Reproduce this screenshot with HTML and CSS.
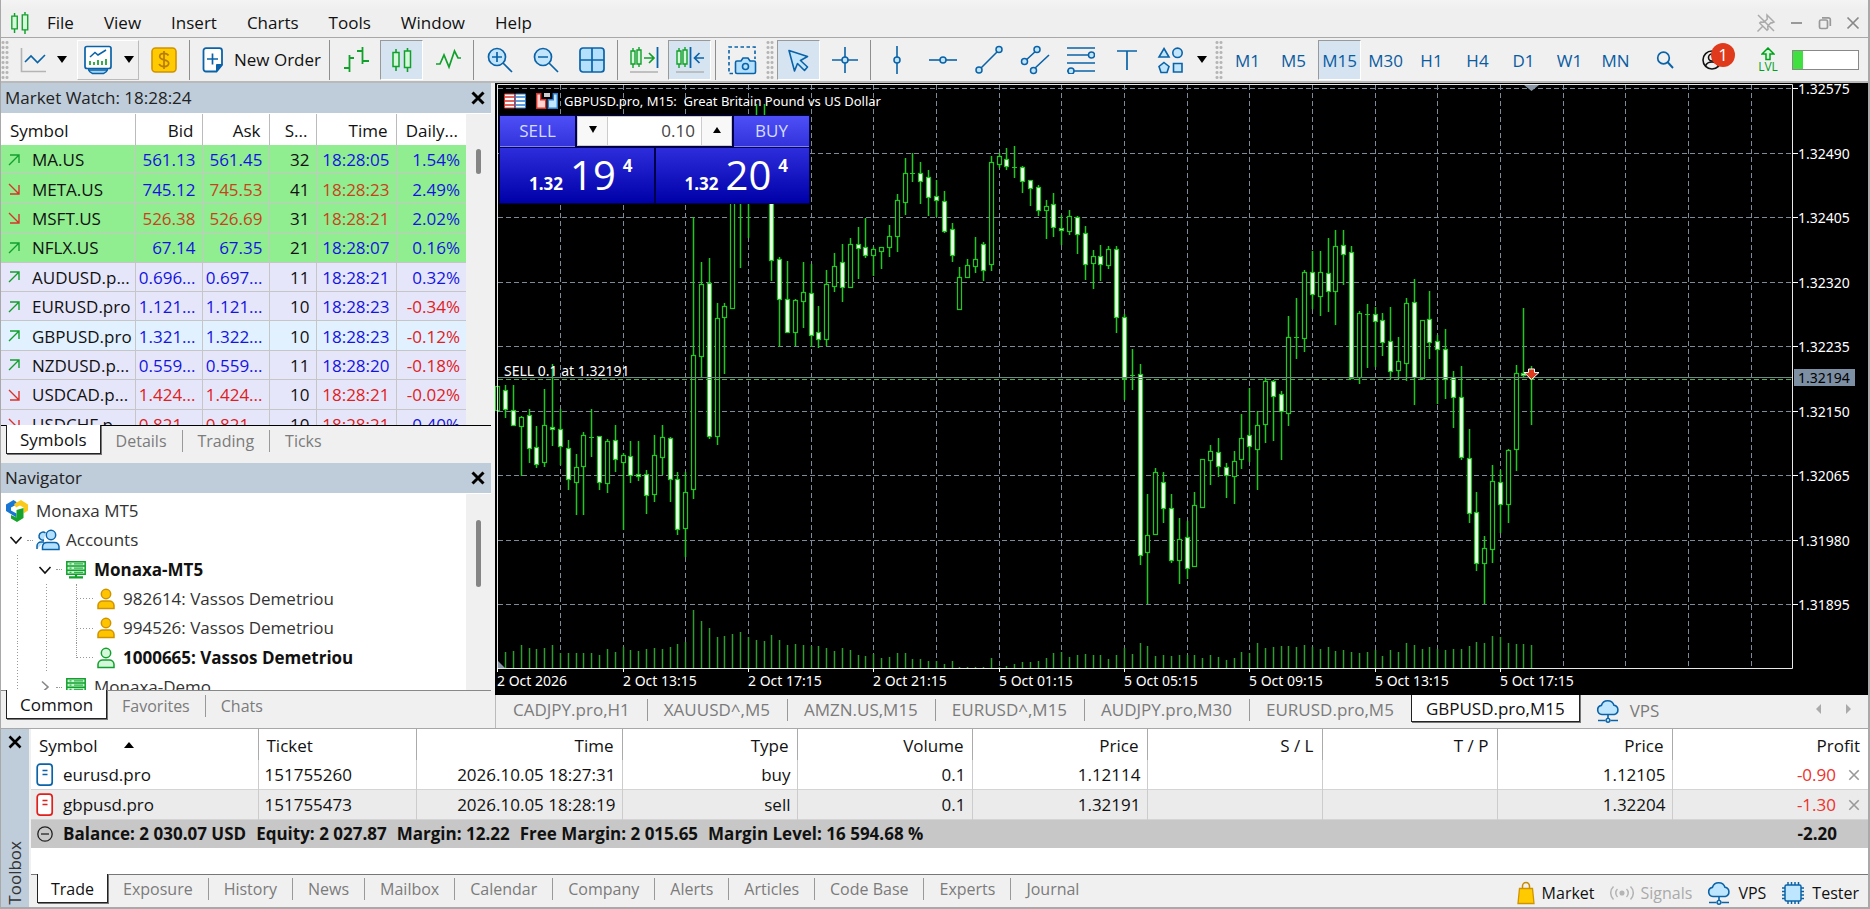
FILE: index.html
```html
<!DOCTYPE html>
<html lang="en">
<head>
<meta charset="utf-8">
<title>Monaxa MT5</title>
<link rel="stylesheet" href="styles.css">
</head>
<body>
<svg class="defs" width="0" height="0" aria-hidden="true">
  <defs>
    <symbol id="i-x" viewBox="0 0 14 14"><path d="M1.5 1.5l11 11M12.5 1.5l-11 11" fill="none" stroke="currentColor"/></symbol>
    <symbol id="i-up" viewBox="0 0 12 12"><path d="M1 11L11 1M2 1h9v8" fill="none" stroke="#12a02c" stroke-width="1.4"/></symbol>
    <symbol id="i-dn" viewBox="0 0 12 12"><path d="M1 1l10 10M11 2v9H2" fill="none" stroke="#d8332a" stroke-width="1.4"/></symbol>
    <symbol id="i-cloud" viewBox="0 0 24 24"><path d="M6 15.5a4.6 4.6 0 0 1-.6-9.1A6.6 6.6 0 0 1 18 6.3a4.7 4.7 0 0 1 .3 9.2z" fill="#bfe6ff" stroke="#0a63a8" stroke-width="1.6"/><path d="M12 15.5v4M2 21.5h7.5M14.5 21.5H22" fill="none" stroke="#0a63a8" stroke-width="1.6"/><circle cx="12" cy="21.3" r="1.9" fill="#bfe6ff" stroke="#0a63a8" stroke-width="1.4"/></symbol>
    <symbol id="i-user" viewBox="0 0 18 22"><circle cx="9" cy="6" r="4.7" stroke-width="1.5"/><path d="M1 20.5v-3.2a4.6 4.6 0 0 1 4.6-4.2h6.8a4.6 4.6 0 0 1 4.6 4.2v3.2z" stroke-width="1.5"/></symbol>
    <symbol id="i-server" viewBox="0 0 20 18"><path d="M.8.8h18.4v12.4H.8zM.8 5h18.4M.8 9.2h18.4" fill="#c4f7cf" stroke="#12a02c" stroke-width="1.5"/><path d="M3.5 2.9h2M3.5 7.1h2M3.5 11.3h2M8 2.9h9M8 7.1h9M8 11.3h9" stroke="#12a02c" stroke-width="1"/><path d="M10 13v3M3 16.4h14" stroke="#12a02c" stroke-width="2.2"/></symbol>
    <symbol id="i-chev" viewBox="0 0 14 14"><path d="M1.5 4L7 10l5.500-6" fill="none" stroke="currentColor" stroke-width="1.6"/></symbol>
    <symbol id="i-doc" viewBox="0 0 18 24"><rect x="1.200" y="1.200" width="15" height="21" rx="3" fill="#fff" stroke="currentColor" stroke-width="1.700"/><path d="M6.500 7.500h5M6.500 11.500h5" stroke="currentColor" stroke-width="1.300"/></symbol>
    <symbol id="i-candles" viewBox="0 0 22 24"><path d="M5 1v22M16.500 0v24" stroke="#12a02c" stroke-width="1.600"/><path d="M2 4.500h6v14H2zM13.500 3h6v16.500h-6z" fill="#d5f8da" stroke="#12a02c" stroke-width="1.500"/></symbol>
  </defs>
</svg>

<div class="app">
  <header class="menubar">
    <svg class="logo" width="20" height="22"><use href="#i-candles"/></svg>
    <nav class="menu">
      <button>File</button><button>View</button><button>Insert</button><button>Charts</button><button>Tools</button><button>Window</button><button>Help</button>
    </nav>
    <div class="winctl">
      <button aria-label="Unpin"><svg width="20" height="20" viewBox="0 0 20 20" fill="none" stroke="#aaa" stroke-width="1.500"><path d="M1.500 18.500l5-5M11 2l7 7-2 1-1-.3-3.300 3.300.3 3.300-1 1L3.700 10l1-1 3.300.3 3.300-3.300L11 4zM2 2l16 16"/></svg></button>
      <button aria-label="Minimize"><svg width="14" height="14"><path d="M1 7h11" stroke="#999" stroke-width="2"/></svg></button>
      <button aria-label="Restore"><svg width="14" height="14" fill="none" stroke="#999" stroke-width="1.700"><rect x="1.500" y="4" width="8" height="8.500" rx="1.500"/><path d="M4 1.800h6.500a1.800 1.800 0 0 1 1.800 1.800V10"/></svg></button>
      <button aria-label="Close" class="grey"><svg width="14" height="14" stroke-width="1.700"><use href="#i-x"/></svg></button>
    </div>
  </header>

  <div class="toolbar">
    <i class="grip"></i>
    <button class="tb w-line" aria-label="Line studies"><svg width="28" height="28" viewBox="0 0 28 28" fill="none"><path d="M2.500 2v23.500H27" stroke="#b4b4b4" stroke-width="1.600"/><path d="M6 16l6-6 6.500 6.500L26 9" stroke="#0a63a8" stroke-width="1.600"/></svg><b class="caret"></b></button>
    <button class="tb w-ind raised" aria-label="Indicators"><svg width="30" height="30" viewBox="0 0 30 30" fill="none"><path d="M4.500 22h21l-2 4.500-3 2h-11l-3-2zM5 25h20" fill="#a9d3ee" stroke="#0a63a8" stroke-width="1.300"/><rect x="2" y="1.500" width="26" height="22" rx="2" fill="#fff" stroke="#0a63a8" stroke-width="1.700"/><path d="M7 12l5-4.500 3 2.500 8-5" stroke="#0a63a8" stroke-width="1.500"/><path d="M7 20v-4M11 20v-3M15 20v-5M19 20v-4M23 20v-6" stroke="#12a02c" stroke-width="1.700"/></svg><b class="caret"></b></button>
    <button class="tb" aria-label="Symbols"><svg width="26" height="26" viewBox="0 0 26 26"><rect x="1" y="1" width="24" height="24" rx="3.500" fill="#ffcb00" stroke="#d09300" stroke-width="1.600"/><path d="M17.500 8.500c-.8-1.500-2.300-2.200-4.500-2.200-2.600 0-4.300 1.200-4.300 3.200 0 4.600 9 2 9 6.800 0 2.200-2 3.300-4.700 3.300-2.500 0-4.200-.9-4.900-2.600M13 4v18" fill="none" stroke="#b87b00" stroke-width="1.700"/></svg></button>
    <i class="sep"></i>
    <button class="tb w-order"><svg width="22" height="26" viewBox="0 0 22 26"><path d="M4 1.200h13.500a2.500 2.500 0 0 1 2.500 2.500V18l-5.500 6.500H4A2.500 2.500 0 0 1 1.500 22V3.700A2.500 2.500 0 0 1 4 1.200z" fill="#fff" stroke="#0a63a8" stroke-width="1.800"/><path d="M20 17.500h-5.500v7z" fill="#0a63a8" stroke="#0a63a8"/><path d="M10.500 6.500v11M5 12h11" stroke="#0a63a8" stroke-width="1.700"/></svg><span>New Order</span></button>
    <i class="sep"></i>
    <button class="tb" aria-label="Bar chart"><svg width="26" height="28" viewBox="0 0 26 28"><path d="M6.500 9v17M1 22h5.500M6.500 12H11M19.500 1v17M14 5h5.500M19.500 15H26" fill="none" stroke="#12a02c" stroke-width="1.800"/></svg></button>
    <button class="tb on" aria-label="Candlesticks"><svg width="22" height="26"><use href="#i-candles"/></svg></button>
    <button class="tb" aria-label="Line chart"><svg width="26" height="24" viewBox="0 0 26 24"><path d="M1 16h4l4-9 5 12 5.500-16L23 10h3" fill="none" stroke="#12a02c" stroke-width="1.700"/></svg></button>
    <i class="sep"></i>
    <button class="tb" aria-label="Zoom in"><svg width="28" height="28" viewBox="0 0 28 28"><circle cx="11" cy="11" r="8.500" fill="#c3e5fb" stroke="#0a63a8" stroke-width="1.700"/><path d="M17 17l9 9M6 11h10M11 6v10" stroke="#0a63a8" stroke-width="1.700"/></svg></button>
    <button class="tb" aria-label="Zoom out"><svg width="28" height="28" viewBox="0 0 28 28"><circle cx="11" cy="11" r="8.500" fill="#c3e5fb" stroke="#0a63a8" stroke-width="1.700"/><path d="M17 17l9 9M6 11h10" stroke="#0a63a8" stroke-width="1.700"/></svg></button>
    <button class="tb" aria-label="Tile windows"><svg width="26" height="26" viewBox="0 0 26 26"><rect x="1" y="1" width="24" height="24" rx="3" fill="#b5e0fd" stroke="#0a63a8" stroke-width="1.700"/><path d="M13 1v24M1 13h24" stroke="#0a63a8" stroke-width="1.700"/></svg></button>
    <i class="sep"></i>
    <button class="tb" aria-label="Shift chart end"><svg width="30" height="28" viewBox="0 0 30 28"><path d="M4 2v20M10 1v20" stroke="#12a02c" stroke-width="1.400"/><path d="M2 5h4v13H2zM8 4h4v14H8z" fill="#d5f8da" stroke="#12a02c" stroke-width="1.400"/><path d="M15 12h9M20 7l5 5-5 5" fill="none" stroke="#12a02c" stroke-width="1.700"/><path d="M28.500 1v21" stroke="#0a63a8" stroke-width="1.800"/><path d="M1 26h28" stroke="#b4b4b4" stroke-width="1.600"/></svg></button>
    <button class="tb on" aria-label="Auto scroll"><svg width="30" height="28" viewBox="0 0 30 28"><path d="M4 2v20M10 1v20" stroke="#12a02c" stroke-width="1.400"/><path d="M2 5h4v13H2zM8 4h4v14H8z" fill="#d5f8da" stroke="#12a02c" stroke-width="1.400"/><path d="M29 12H20M24.500 7l-5 5 5 5" fill="none" stroke="#0a63a8" stroke-width="1.700"/><path d="M15.500 1v21" stroke="#0a63a8" stroke-width="1.800"/><path d="M1 26h28" stroke="#b4b4b4" stroke-width="1.600"/></svg></button>
    <i class="sep"></i>
    <button class="tb" aria-label="Screenshot"><svg width="30" height="30" viewBox="0 0 30 30" fill="none"><path d="M6 28.500H2V2h26v12" stroke="#0a63a8" stroke-width="1.600" stroke-dasharray="3.500 2.500"/><path d="M10 16h4l2-3h5l2 3h4a1.500 1.500 0 0 1 1.500 1.500V27a1.500 1.500 0 0 1-1.500 1.500H10A1.500 1.500 0 0 1 8.500 27v-9.500A1.500 1.500 0 0 1 10 16z" fill="#b5e0fd" stroke="#0a63a8" stroke-width="1.600"/><circle cx="18.500" cy="21.500" r="3" stroke="#0a63a8" stroke-width="1.600"/></svg></button>
    <i class="grip"></i>
    <button class="tb on" aria-label="Cursor"><svg width="24" height="24" viewBox="0 0 24 24"><path d="M2 2.500l18.500 6-7 4 7 6.500-3 3.500-7-7-3 7.500z" fill="#c3e5fb" stroke="#0a63a8" stroke-width="1.600" stroke-linejoin="round"/></svg></button>
    <button class="tb" aria-label="Crosshair"><svg width="26" height="26" viewBox="0 0 26 26"><path d="M13 0v26M0 13h26" stroke="#0a63a8" stroke-width="1.600"/><circle cx="13" cy="13" r="3" fill="#c3e5fb" stroke="#0a63a8" stroke-width="1.500"/></svg></button>
    <i class="sep"></i>
    <button class="tb" aria-label="Vertical line"><svg width="10" height="28" viewBox="0 0 10 28"><path d="M5 0v28" stroke="#0a63a8" stroke-width="1.600"/><circle cx="5" cy="14" r="3" fill="#c3e5fb" stroke="#0a63a8" stroke-width="1.500"/></svg></button>
    <button class="tb" aria-label="Horizontal line"><svg width="28" height="10" viewBox="0 0 28 10"><path d="M0 5h28" stroke="#0a63a8" stroke-width="1.600"/><circle cx="14" cy="5" r="3" fill="#c3e5fb" stroke="#0a63a8" stroke-width="1.500"/></svg></button>
    <button class="tb" aria-label="Trendline"><svg width="30" height="30" viewBox="0 0 30 30"><path d="M5 25L25 5" stroke="#0a63a8" stroke-width="1.600"/><circle cx="5" cy="25" r="3" fill="#c3e5fb" stroke="#0a63a8" stroke-width="1.500"/><circle cx="25" cy="4.500" r="3" fill="#c3e5fb" stroke="#0a63a8" stroke-width="1.500"/></svg></button>
    <button class="tb" aria-label="Channel"><svg width="30" height="30" viewBox="0 0 30 30"><path d="M4 17L17 5M13 25l16-15" stroke="#0a63a8" stroke-width="1.600"/><g fill="#c3e5fb" stroke="#0a63a8" stroke-width="1.500"><circle cx="4.500" cy="16.500" r="3"/><circle cx="17" cy="4.500" r="3"/><circle cx="13.500" cy="25.500" r="3"/></g></svg></button>
    <button class="tb" aria-label="Fibonacci"><svg width="28" height="28" viewBox="0 0 28 28"><path d="M0 2h28M0 9h28M0 17h28M0 25h28" stroke="#0a63a8" stroke-width="1.600"/><g fill="#c3e5fb" stroke="#0a63a8" stroke-width="1.500"><circle cx="24.500" cy="9" r="3"/><circle cx="4" cy="25" r="3"/></g></svg></button>
    <button class="tb" aria-label="Text"><svg width="20" height="22" viewBox="0 0 20 22"><path d="M0 2h20M10 2v19" stroke="#0a63a8" stroke-width="1.700"/></svg></button>
    <button class="tb w-shapes" aria-label="Shapes"><svg width="28" height="28" viewBox="0 0 28 28" fill="#c3e5fb" stroke="#0a63a8" stroke-width="1.600"><path d="M7 2.500l5 8.500H2z"/><circle cx="20.500" cy="6.800" r="4.700"/><path d="M7 16.500l5 4-2 6H4l-2-6z"/><path d="M16.500 17.500h8.500v8.500h-8.500z"/></svg><b class="caret"></b></button>
    <i class="grip"></i>
    <button class="tb tf">M1</button><button class="tb tf">M5</button><button class="tb tf on">M15</button><button class="tb tf">M30</button><button class="tb tf">H1</button><button class="tb tf">H4</button><button class="tb tf">D1</button><button class="tb tf">W1</button><button class="tb tf">MN</button>
    <button class="tb w-find" aria-label="Search"><svg width="18" height="18" viewBox="0 0 18 18"><circle cx="7.500" cy="7" r="5.800" fill="none" stroke="#0a63a8" stroke-width="1.700"/><path d="M11.500 11l5.500 6" stroke="#0a63a8" stroke-width="1.900"/></svg></button>
    <button class="tb w-acct" aria-label="Notifications"><svg width="20" height="20" viewBox="0 0 20 20" fill="none" stroke="#111" stroke-width="1.600"><circle cx="10" cy="10" r="9"/><circle cx="10" cy="7.500" r="3.500"/><path d="M3.500 16c1-3 3-4 6.500-4s5.500 1 6.500 4"/></svg><span class="badge">1</span></button>
    <button class="tb w-lvl" aria-label="Level"><svg width="14" height="14" viewBox="0 0 14 14"><path d="M7 1l6 6H9v5.500H5V7H1z" fill="#d5f8da" stroke="#00a11a" stroke-width="1.500"/></svg><span>LVL</span></button>
    <div class="gauge"><i></i></div>
  </div>

  <main class="main">
    <aside class="side">
      <section class="panel watch">
        <div class="phead"><h2>Market Watch: 18:28:24</h2><button aria-label="Close"><svg width="14" height="14" stroke-width="3"><use href="#i-x"/></svg></button></div>
        <div class="pbody">
          <table class="quotes">
            <colgroup><col class="q1"><col class="q2"><col class="q2"><col class="q3"><col class="q4"><col class="q5"></colgroup>
            <thead><tr><th>Symbol</th><th>Bid</th><th>Ask</th><th>S...</th><th>Time</th><th>Daily...</th></tr></thead>
            <tbody>
              <tr class="g"><td><svg class="dir"><use href="#i-up"/></svg>MA.US</td><td class="b">561.13</td><td class="b">561.45</td><td>32</td><td class="b">18:28:05</td><td class="b">1.54%</td></tr>
              <tr class="g"><td><svg class="dir"><use href="#i-dn"/></svg>META.US</td><td class="b">745.12</td><td class="r">745.53</td><td>41</td><td class="r">18:28:23</td><td class="b">2.49%</td></tr>
              <tr class="g"><td><svg class="dir"><use href="#i-dn"/></svg>MSFT.US</td><td class="r">526.38</td><td class="r">526.69</td><td>31</td><td class="r">18:28:21</td><td class="b">2.02%</td></tr>
              <tr class="g"><td><svg class="dir"><use href="#i-up"/></svg>NFLX.US</td><td class="b">67.14</td><td class="b">67.35</td><td>21</td><td class="b">18:28:07</td><td class="b">0.16%</td></tr>
              <tr><td><svg class="dir"><use href="#i-up"/></svg>AUDUSD.p...</td><td class="b">0.696...</td><td class="b">0.697...</td><td>11</td><td class="b">18:28:21</td><td class="b">0.32%</td></tr>
              <tr><td><svg class="dir"><use href="#i-up"/></svg>EURUSD.pro</td><td class="b">1.121...</td><td class="b">1.121...</td><td>10</td><td class="b">18:28:23</td><td class="r">-0.34%</td></tr>
              <tr class="sel"><td><svg class="dir"><use href="#i-up"/></svg>GBPUSD.pro</td><td class="b">1.321...</td><td class="b">1.322...</td><td>10</td><td class="b">18:28:23</td><td class="r">-0.12%</td></tr>
              <tr><td><svg class="dir"><use href="#i-up"/></svg>NZDUSD.p...</td><td class="b">0.559...</td><td class="b">0.559...</td><td>11</td><td class="b">18:28:20</td><td class="r">-0.18%</td></tr>
              <tr><td><svg class="dir"><use href="#i-dn"/></svg>USDCAD.p...</td><td class="r">1.424...</td><td class="r">1.424...</td><td>10</td><td class="r">18:28:21</td><td class="r">-0.02%</td></tr>
              <tr><td><svg class="dir"><use href="#i-dn"/></svg>USDCHF.p...</td><td class="r">0.821...</td><td class="r">0.821...</td><td>10</td><td class="r">18:28:21</td><td class="b">0.40%</td></tr>
            </tbody>
          </table>
          <div class="scroll s-watch"><i></i></div>
        </div>
        <div class="tabs black"><button class="tab cur">Symbols</button><button class="tab">Details</button><button class="tab">Trading</button><button class="tab">Ticks</button></div>
      </section>
      <section class="panel navi">
        <div class="phead"><h2>Navigator</h2><button aria-label="Close"><svg width="14" height="14" stroke-width="3"><use href="#i-x"/></svg></button></div>
        <div class="pbody">
          <ul class="tree">
            <li class="l0"><svg class="brand" width="22" height="22" viewBox="0 0 22 22"><path d="M0 4.500L7.500 0l3 2v2.500L5 7.500v3l5.500 3v4L0 11z" fill="#1976d2"/><path d="M8 4l7-4 7 4.500v6l-4.500 3V7.500L14 5.500l-4 2z" fill="#fbc91a"/><path d="M5 15l5.500 2.500V10l7-2v10l-6.500 4-6-3.500z" fill="#16a32b"/></svg><span>Monaxa MT5</span></li>
            <li class="l1"><svg class="chev"><use href="#i-chev"/></svg><i class="dots"></i><svg width="24" height="22" viewBox="0 0 24 22" fill="#b5e0fd" stroke="#0a63a8" stroke-width="1.500"><path d="M9.500 4a4 4 0 1 0-1.500 7M1 20v-3a4 4 0 0 1 4-4h3"/><circle cx="15" cy="6" r="4.700"/><path d="M6.500 20.500v-3a4.500 4.500 0 0 1 4.500-4h7.500a4.500 4.500 0 0 1 4.500 4v3z"/></svg><span>Accounts</span></li>
            <li class="l2"><svg class="chev"><use href="#i-chev"/></svg><i class="dots"></i><svg width="20" height="18"><use href="#i-server"/></svg><strong>Monaxa-MT5</strong></li>
            <li class="l3"><i class="twig"></i><svg class="gold" width="18" height="22"><use href="#i-user"/></svg><span>982614: Vassos Demetriou</span></li>
            <li class="l3"><i class="twig"></i><svg class="gold" width="18" height="22"><use href="#i-user"/></svg><span>994526: Vassos Demetriou</span></li>
            <li class="l3"><i class="twig last"></i><svg class="live" width="18" height="22"><use href="#i-user"/></svg><strong>1000665: Vassos Demetriou</strong></li>
            <li class="l2"><svg class="chev closed"><use href="#i-chev"/></svg><i class="dots"></i><svg width="20" height="18"><use href="#i-server"/></svg><span>Monaxa-Demo</span></li>
          </ul>
          <div class="scroll s-navi"><i></i></div>
        </div>
        <div class="tabs"><button class="tab cur">Common</button><button class="tab">Favorites</button><button class="tab">Chats</button></div>
      </section>
    </aside>

    <section class="charts">
      <div class="chart">
        <svg id="plot" class="plot"></svg>
        <div class="ctitle">
          <svg width="22" height="16" viewBox="0 0 22 16"><path d="M.5 1h10v14H.5z" fill="#fff" stroke="#d8332a"/><path d="M11.500 1h10v14h-10z" fill="#fff" stroke="#2c7fd0"/><path d="M1 4h9M1 8h9M1 12h9" stroke="#d8332a" stroke-width="1.700"/><path d="M12 4h9M12 8h9M12 12h9" stroke="#2c7fd0" stroke-width="1.700"/></svg>
          <svg width="22" height="16" viewBox="0 0 22 16"><path d="M.7.7h4v6h5v8.600h-9z" fill="#ffd3cf" stroke="#d8332a" stroke-width="1.400"/><path d="M21.300.7h-4v6h-5v8.600h9z" fill="#c3e5fb" stroke="#2c7fd0" stroke-width="1.400"/><path d="M8 0h6v4H8z" fill="#ccc"/></svg>
          <span>GBPUSD.pro, M15:&nbsp; Great Britain Pound vs US Dollar</span>
        </div>
        <div class="oneclick">
          <button class="oc-side sell">SELL</button>
          <div class="spin"><button aria-label="Decrease"><b class="caret"></b></button><input aria-label="Volume" value="0.10"><button aria-label="Increase"><b class="caret flip"></b></button></div>
          <button class="oc-side buy">BUY</button>
          <button class="oc-price"><b>1.32</b><span>19</span><sup>4</sup></button>
          <button class="oc-price"><b>1.32</b><span>20</span><sup>4</sup></button>
        </div>
      </div>
      <div class="ctabs">
        <button class="tab">CADJPY.pro,H1</button><button class="tab">XAUUSD^,M5</button><button class="tab">AMZN.US,M15</button><button class="tab">EURUSD^,M15</button><button class="tab">AUDJPY.pro,M30</button><button class="tab">EURUSD.pro,M5</button><button class="tab cur">GBPUSD.pro,M15</button><button class="tab vps"><svg width="24" height="24"><use href="#i-cloud"/></svg>VPS</button>
        <span class="arrows"><button aria-label="Previous"><svg width="6" height="10"><path d="M5 0v10L0 5z" fill="#aaa"/></svg></button><button aria-label="Next"><svg width="6" height="10"><path d="M0 0v10l5-5z" fill="#aaa"/></svg></button></span>
      </div>
    </section>
  </main>

  <section class="toolbox">
    <div class="strip"><button aria-label="Close"><svg width="14" height="14" stroke-width="2.600"><use href="#i-x"/></svg></button><span>Toolbox</span></div>
    <div class="tbody">
      <div class="twrap">
      <table class="trades">
        <colgroup><col class="c1"><col class="c2"><col class="c3"><col class="c4"><col class="c4"><col class="c4"><col class="c4"><col class="c4"><col class="c4"><col></colgroup>
        <thead><tr><th>Symbol <b class="caret flip"></b></th><th>Ticket</th><th>Time</th><th>Type</th><th>Volume</th><th>Price</th><th>S / L</th><th>T / P</th><th>Price</th><th>Profit</th></tr></thead>
        <tbody>
          <tr><td><svg class="doc buyc" width="18" height="24"><use href="#i-doc"/></svg>eurusd.pro</td><td>151755260</td><td>2026.10.05 18:27:31</td><td>buy</td><td>0.1</td><td>1.12114</td><td></td><td></td><td>1.12105</td><td class="loss">-0.90<button aria-label="Close position"><svg width="12" height="12" stroke-width="1.900"><use href="#i-x"/></svg></button></td></tr>
          <tr class="alt"><td><svg class="doc sellc" width="18" height="24"><use href="#i-doc"/></svg>gbpusd.pro</td><td>151755473</td><td>2026.10.05 18:28:19</td><td>sell</td><td>0.1</td><td>1.32191</td><td></td><td></td><td>1.32204</td><td class="loss">-1.30<button aria-label="Close position"><svg width="12" height="12" stroke-width="1.900"><use href="#i-x"/></svg></button></td></tr>
        </tbody>
        <tfoot><tr><td colspan="9"><svg class="minus" width="16" height="16" viewBox="0 0 16 16" fill="none" stroke="#222" stroke-width="1.300"><circle cx="8" cy="8" r="7.200"/><path d="M4 8h8"/></svg><span>Balance: 2 030.07 USD</span><span>Equity: 2 027.87</span><span>Margin: 12.22</span><span>Free Margin: 2 015.65</span><span>Margin Level: 16 594.68 %</span></td><td>-2.20</td></tr></tfoot>
      </table>
      </div>
      <div class="btabs">
        <button class="tab cur">Trade</button><button class="tab">Exposure</button><button class="tab">History</button><button class="tab">News</button><button class="tab">Mailbox</button><button class="tab">Calendar</button><button class="tab">Company</button><button class="tab">Alerts</button><button class="tab">Articles</button><button class="tab">Code Base</button><button class="tab">Experts</button><button class="tab">Journal</button>
        <span class="status">
          <button><svg width="18" height="24" viewBox="0 0 18 24"><path d="M5.500 9V5a3.500 3.500 0 0 1 7 0v4" fill="none" stroke="#c78a00" stroke-width="1.500"/><path d="M2.500 7.500h13l1.500 15H1z" fill="#ffcb00" stroke="#d09300" stroke-width="1.300"/></svg>Market</button>
          <button class="off"><svg width="24" height="18" viewBox="0 0 24 18" fill="none" stroke="#b4b4b4" stroke-width="1.500"><circle cx="12" cy="9" r="1.800" fill="#b4b4b4"/><path d="M7.500 5a5.500 5.500 0 0 0 0 8M16.500 5a5.500 5.500 0 0 1 0 8M3.500 2.500a9 9 0 0 0 0 13M20.500 2.500a9 9 0 0 1 0 13"/></svg>Signals</button>
          <button><svg width="24" height="24"><use href="#i-cloud"/></svg>VPS</button>
          <button><svg width="24" height="24" viewBox="0 0 24 24" stroke="#0a63a8" stroke-width="1.500"><path d="M7 1v22M10.500 1v22M14 1v22M17.500 1v22M1 7h22M1 10.500h22M1 14h22M1 17.500h22"/><rect x="4" y="4" width="16" height="16" rx="1.500" fill="#bfe6ff"/></svg>Tester</button>
        </span>
      </div>
    </div>
  </section>
</div>
<script src="chart.js"></script>
</body>
</html>
```
FILE: styles.css
```css
* { box-sizing: border-box; }
html, body { margin: 0; height: 100%; }
body { background: #f0f0f0; font: 17px/22px "Open Sans", "Noto Sans", sans-serif; color: #111; }
button, input { font: inherit; color: inherit; background: none; border: 0; padding: 0; margin: 0; }
h2 { font: inherit; margin: 0; }
.defs { position: absolute; }
.app { display: flex; flex-direction: column; height: 100vh; border: solid #a9a9a9; border-width: 0 2px 2px 1px; overflow: hidden; }

.menubar { display: flex; align-items: center; flex: 0 0 38px; padding: 8px 8px 0 9px; border-bottom: 1px solid #a8a8a8; background: linear-gradient(#f4f4f4, #efefef 10px); }
.menu { display: flex; flex: 1; padding-left: 2px; }
.menu button { padding: 0 15px; }
.winctl { display: flex; align-items: center; gap: 14px; }
.winctl button { display: flex; }
.grey { color: #888; }

.toolbar { display: flex; align-items: center; gap: 3px; flex: 0 0 45px; border-bottom: 2px solid #b9b9b9; }
.tb { display: flex; align-items: center; justify-content: center; flex: 0 0 43px; height: 40px; }
.tb.on { background: #d6e4f1; border: 1px solid; border-color: #999 #fff #fff #999; }
.grip { flex: 0 0 8px; height: 40px; background: radial-gradient(circle, #b5b5b5 1px, transparent 2px) 0 0 / 4px 5px; }
.sep { flex: 0 0 3px; height: 40px; background: linear-gradient(90deg, transparent 1px, #8e8e8e 1px, #8e8e8e 2px, transparent 2px); }
.caret { display: inline-block; border: solid transparent; border-width: 7px 5px 0; border-top-color: #000; }
.caret.flip { border-width: 0 5px 6px; border-bottom-color: #000; }
.w-line { flex-basis: 62px; gap: 10px; }
.w-ind { flex-basis: 62px; gap: 11px; }
.raised { border: 1px solid; border-color: #fff #bbb #bbb #fff; }
.w-order { flex-basis: 131px; gap: 10px; padding-left: 4px; }
.w-shapes { flex-basis: 61px; gap: 12px; }
.tf { color: #0a5ca0; font-size: 17px; padding-top: 2px; }
.w-find { flex-basis: 50px; }
.w-acct { flex-basis: 51px; position: relative; padding-right: 14px; }
.badge { position: absolute; right: 9px; top: 3px; width: 24px; height: 24px; border-radius: 50%; background: #e03a1c; color: #fff; line-height: 24px; text-align: center; }
.w-lvl { flex-direction: column; flex-basis: 42px; color: #00a11a; font-size: 12px; line-height: 12px; }
.gauge { width: 67px; height: 20px; border: 1px solid #888; background: #fff; }
.gauge i { display: block; width: 16%; height: 100%; background: #3fe03f; }

.main { display: flex; flex: 1; min-height: 0; }
.side { display: flex; flex-direction: column; flex: 0 0 490px; margin-right: 4px; }
.panel { display: flex; flex-direction: column; min-height: 0; }
.watch { flex: 1; }
.navi { flex: 0 0 265px; }
.phead { display: flex; align-items: center; justify-content: space-between; flex: 0 0 31px; padding: 0 6px 0 4px; background: #bfcddb; border-bottom: 1px solid #fff; color: #222; }
.phead button { display: flex; color: #000; }
.pbody { display: flex; flex: 1; min-height: 0; overflow: hidden; background: #fff; }
.scroll { flex: 1; background: #f0f0f0; }
.scroll i { display: block; width: 5px; height: 25px; margin: 35px 0 0 10px; border-radius: 3px; background: #858585; }
.s-navi i { height: 67px; margin-top: 26px; }

.quotes { table-layout: fixed; width: 465px; height: 325px; flex: none; border-collapse: collapse; }
.q1 { width: 134px; } .q2 { width: 67px; } .q3 { width: 47px; } .q4 { width: 80px; } .q5 { width: 70px; }
.quotes th { height: 31px; padding: 2px 8px 0 0; font-weight: 400; text-align: right; border-right: 1px solid #bbb; }
.quotes th:first-child { text-align: left; padding-left: 9px; }
.quotes td { padding: 2px 6px 0 0; text-align: right; white-space: nowrap; background: #e6e6fa; border: solid #c6c6c6; border-width: 0 1px 1px 0; }
.quotes td:first-child { text-align: left; padding-right: 0; }
.quotes th:last-child, .quotes td:last-child { border-right: 0; }
.quotes .g td { background: #90ee90; }
.quotes .sel td { background: #e1f1ff; }
.quotes .b { color: #1414e0; }
.quotes .r { color: #e0201c; }
.quotes .g .r { color: #c8431a; }
.dir { width: 12px; height: 12px; margin: 0 12px 4px 7px; vertical-align: middle; }

.tabs { display: flex; flex: 0 0 38px; align-items: flex-start; padding-left: 5px; border-top: 1px solid #888; }
.tabs.black { border-color: #000; }
.tab { color: #7b7b7b; font-size: 16px; line-height: 22px; padding: 0 15px; border-right: 1px solid #999; margin-top: 4px; white-space: nowrap; }
.tab:last-of-type { border-right: 0; }
.tab.cur { margin-top: -1px; padding: 4px 13px 2px; color: #111; background: #fff; border: 1px solid #222; border-top: 0; box-shadow: 1px 1px 0 #777; }
.tabs .cur { font-size: 17px; }

.tree { list-style: none; margin: 0; padding: 2px 0 0; width: 465px; height: 208px; flex: none; display: grid; grid-template-rows: repeat(7, 1fr); }
.tree li { display: flex; align-items: center; }
.tree svg { flex: none; }
.tree span, .tree strong { margin-left: 8px; white-space: nowrap; }
.tree span { color: #333; }
.l0 { padding-left: 5px; }
.l1 { padding-left: 8px; }
.l2 { padding-left: 37px; }
.l3 { padding-left: 75px; }
.l2, .l3 { background: repeating-linear-gradient(#999 0 1px, transparent 1px 3px) 16px 0 / 1px 100% no-repeat; }
.l3 { background: repeating-linear-gradient(#999 0 1px, transparent 1px 3px) 16px 0 / 1px 100% no-repeat, repeating-linear-gradient(#999 0 1px, transparent 1px 3px) 45px 0 / 1px 100% no-repeat; }
.tree .l1 span { margin-left: 6px; }
.chev { width: 14px; height: 14px; color: #111; }
.closed { transform: rotate(-90deg); color: #888; }
.dots { width: 6px; margin: 0 3px 0 4px; border-top: 1px dotted #999; }
.l2 .dots { margin-right: 4px; }
.twig { align-self: stretch; width: 17px; margin-right: 4px; border-left: 1px dotted #999; background: repeating-linear-gradient(90deg, #999 0 1px, transparent 1px 3px) 0 50% / 100% 1px no-repeat; }
.last { align-self: flex-start; height: 15px; background-position: 0 100%; }
.gold { fill: #ffc400; stroke: #d09300; }
.live { fill: #d5f8da; stroke: #12a02c; }

.charts { display: flex; flex-direction: column; flex: 1; min-width: 0; }
.chart { position: relative; flex: 1; min-height: 0; background: #000; }
.plot { display: block; width: 100%; height: 100%; }
.plot text { font: 14px "Noto Sans", "Open Sans", sans-serif; fill: #fff; }
.ctitle { position: absolute; left: 9px; top: 8px; display: flex; align-items: center; gap: 10px; color: #fff; font: 13px/20px "Noto Sans", "Open Sans", sans-serif; }
.ctitle span { margin-left: -4px; }
.oneclick { position: absolute; left: 4px; top: 32px; width: 311px; padding: 1px; display: grid; grid-template: 31px 55px / 75px minmax(0, 1fr) minmax(0, 1fr) 75px; gap: 1px 2px; background: #00004a; }
.oc-side { color: #d4dcff; background: linear-gradient(#4f4ff8, #3333dc); border-bottom: 1px solid #7f7fff; }
.spin { grid-column: span 2; display: flex; margin-bottom: 1px; background: #fff; border: 1px solid #ccc; }
.spin button { display: flex; align-items: center; justify-content: center; flex: 0 0 29px; padding-bottom: 3px; background: #f8f8f8; }
.spin .caret { border-left-width: 4px; border-right-width: 4px; }
.spin input { flex: 1; min-width: 0; padding-right: 6px; text-align: right; color: #444; border: solid #ccc; border-width: 0 1px; }
.oc-price { grid-column: span 2; display: flex; justify-content: center; align-items: baseline; gap: 7px; padding-left: 8px; color: #fff; line-height: 20px; background: linear-gradient(#2d2ddc, #0000a8); }
.oc-price b { font-size: 17px; }
.oc-price span { font-size: 40px; line-height: 54px; }
.oc-price sup { font-size: 17px; font-weight: 700; align-self: flex-start; margin-top: 8px; }

.ctabs { display: flex; align-items: flex-start; flex: 0 0 33px; padding-left: 1px; border-left: 1px solid #bbb; }
.ctabs .tab { font-size: 17px; padding: 0 17px 0 16px; }
.ctabs .cur { padding: 4px 14px 1px; margin-top: -1px; }
.ctabs .tab:nth-child(6) { border-right: 0; }
.ctabs .vps { display: flex; align-items: center; gap: 10px; }
.arrows { display: flex; gap: 24px; margin: 9px 16px 0 auto; }
.arrows button { display: flex; }

.toolbox { display: flex; flex: 0 0 179px; border-top: 1px solid #a8a8a8; }
.strip { display: flex; flex-direction: column; justify-content: space-between; align-items: center; flex: 0 0 28px; padding: 6px 0 2px; background: #bfcddb; }
.strip button { display: flex; color: #000; }
.strip span { writing-mode: vertical-rl; transform: rotate(180deg); color: #333; }
.tbody { display: flex; flex-direction: column; flex: 1; min-width: 0; margin-left: 2px; }
.twrap { flex: 1; min-height: 0; background: #fff; }
.trades { width: 100%; height: 119px; table-layout: fixed; border-collapse: collapse; }
.c1 { width: 227px; } .c2 { width: 158px; } .c3 { width: 206px; } .c4 { width: 175px; }
.trades th { height: 31px; padding: 3px 8px 0; font-weight: 400; text-align: right; border-right: 1px solid #aaa; }
.trades td { height: 29px; padding: 1px 6px 0; text-align: right; white-space: nowrap; border-right: 1px solid #ccc; }
.trades tbody tr { border-bottom: 1px solid #d4d4d4; }
.trades th:nth-child(1), .trades th:nth-child(2), .trades td:nth-child(2) { text-align: left; }
.trades td:first-child { text-align: left; }
.trades th .caret { margin: 0 0 4px 22px; }
.trades th:last-child, .trades td:last-child, .trades tfoot td { border-right: 0; }
.alt { background: #ebebeb; }
.trades tfoot tr { background: #c7c7c7; font-weight: 700; }
.trades tfoot span { margin-right: 10px; }
.trades tfoot td:last-child { padding-right: 31px; text-align: right; }
.trades .loss { color: #f0302c; }
.loss button { margin-left: 12px; color: #999; }
.trades tbody .loss { padding-right: 8px; }
.doc { margin: -4px 9px -2px -1px; vertical-align: -4px; }
.buyc { color: #0a63a8; }
.sellc { color: #e0201c; }
.minus { margin: -2px 10px 0 0; vertical-align: -2px; }
.btabs { display: flex; align-items: flex-start; flex: 0 0 33px; padding-left: 6px; border-top: 1px solid #777; }
.btabs .tab { padding: 0 15px; margin-top: 3px; }
.btabs .cur { padding: 4px 13px 2px; margin-top: -1px; }
.status { display: flex; gap: 15px; margin: 5px 9px 0 auto; font-size: 16px; }
.status button { display: flex; align-items: center; gap: 7px; height: 26px; }
.off { color: #aaa; }
```
FILE: chart.js
```js
const NS = 'http://www.w3.org/2000/svg';
const svg = document.getElementById('plot');

// Bar: [kind, high, body top, body bottom, low]; u = up, f = down, d = no body.
const BARS = `u386,386,410,410 f385,390,409,418 f385,410,425,426 u416,417,426,476 f409,415,448,463 f426,447,464,468 u389,425,462,467 f364,427,429,446
f409,429,446,465 f440,448,479,490 u454,467,482,515 u432,435,466,515 d409,437,437,457 f436,436,482,490 u439,441,483,493 f425,440,459,472
u453,455,462,530 f441,456,475,483 f441,474,476,481 f470,474,495,514 u435,455,494,502 u425,437,457,475 f437,438,479,502 f472,479,529,535
u472,492,528,557 u217,355,489,499 u262,284,356,378 f258,283,436,439 u303,318,436,445 u303,306,317,374 u180,190,308,308 d180,190,190,268
d120,180,180,238 d104,150,150,170 d104,160,160,180 f150,170,260,281 f257,259,299,347 f261,299,332,333 u299,300,332,346 u262,292,301,328
f264,293,335,347 f306,332,339,348 u270,284,339,346 u253,266,286,292 f244,262,287,302 u238,244,287,287 f227,244,248,279 f218,247,255,258
u247,249,255,276 u247,247,251,269 u225,236,247,257 u194,200,236,252 u158,173,202,215 d153,173,173,182 f162,173,181,204 f170,177,197,216
f180,196,200,217 f191,201,231,233 f223,229,255,262 u267,277,309,309 u259,265,277,278 u237,259,266,273 f242,244,270,281 u156,162,264,271
u153,156,164,168 f148,159,166,170 d146,167,167,178 f166,167,181,193 f180,180,188,206 f185,187,210,216 u200,206,210,239 f193,204,227,237
f215,228,230,245 u210,216,231,235 f216,217,234,254 f226,233,264,280 u250,256,263,289 f245,256,264,281 u246,249,265,269 f246,249,317,333
f314,317,378,400 d349,375,375,390 f364,374,555,565 u494,535,552,604 u468,472,534,534 f472,482,508,523 f494,508,560,563 u518,539,560,584
f521,537,568,579 u492,505,566,566 u459,459,507,508 u445,451,460,485 f438,452,466,477 f463,467,475,498 u451,461,476,504 u414,438,459,469
f388,435,446,462 u411,425,449,490 u378,381,424,443 f380,381,396,441 f391,394,411,460 u316,337,413,426 d298,337,337,359 u270,272,338,352
f251,272,294,309 u251,272,296,316 f238,273,291,312 u230,246,291,325 f230,245,254,285 f246,252,378,379 u311,313,377,384 d304,314,314,368
f307,314,321,367 f313,320,342,356 f307,341,371,379 u337,361,370,379 u298,303,363,381 f279,302,377,405 u320,320,378,379 f291,319,342,359
f335,341,349,404 f329,349,379,399 f371,377,397,428 f366,397,457,460 f429,458,513,523 f492,512,563,571 u536,548,563,604 u465,481,549,563
f470,482,504,533 u449,450,504,523 u365,373,449,471 f308,373,375,377 d366,378,378,425`.split(/\s+/);

const VOLUME = [668, 652, 651, 645, 648, 649, 648, 645, 653, 653, 653, 653, 653, 655, 649, 652, 647, 650, 651, 649, 648, 649, 647, 644,
  642, 610, 621, 628, 637, 636, 634, 632, 637, 640, 641, 635, 640, 645, 644, 645, 646, 646, 648, 651, 648, 650, 655, 656, 654, 658, 657,
  653, 653, 659, 659, 661, 661, 664, 661, 667, 667, 667, 667, 658, 667, 666, 664, 662, 662, 661, 658, 653, 652, 657, 655, 654, 655, 655,
  659, 655, 648, 654, 643, 646, 656, 655, 656, 655, 655, 655, 658, 655, 657, 660, 658, 652, 653, 643, 648, 647, 646, 646, 647, 645, 647,
  649, 647, 651, 650, 652, 653, 652, 650, 656, 650, 652, 643, 645, 649, 647, 649, 650, 649, 649, 646, 642, 643, 636, 637, 643, 644, 644, 645];

const PRICES = ['1.32575', '1.32490', '1.32405', '1.32320', '1.32235', '1.32150', '1.32065', '1.31980', '1.31895'];
const TIMES = ['2 Oct 2026', '2 Oct 13:15', '2 Oct 17:15', '2 Oct 21:15', '5 Oct 01:15', '5 Oct 05:15', '5 Oct 09:15', '5 Oct 13:15', '5 Oct 17:15'];

const LEFT = 495, TOP = 83, FLOOR = 668;   // data space of the bars
const barX = i => Math.round(497.33 + i * 7.8333);
const GREEN = '#1fc81f';

function add(parent, name, attrs, text) {
  const el = document.createElementNS(NS, name);
  for (const k in attrs) el.setAttribute(k, attrs[k]);
  if (text) el.textContent = text;
  parent.appendChild(el);
  return el;
}

function draw() {
  svg.replaceChildren();
  const right = LEFT + svg.clientWidth - 75;
  const g = add(svg, 'g', { transform: `translate(${-LEFT} ${-TOP})` });
  const line = (x1, y1, x2, y2, stroke, more) => add(g, 'line', { x1, y1, x2, y2, stroke, ...more });

  const grid = { 'stroke-dasharray': '5 3' };
  for (let k = 1; barX(k * 8) < right; k++) line(barX(k * 8) + .5, 85, barX(k * 8) + .5, FLOOR, '#7d8a98', grid);
  PRICES.forEach((p, k) => {
    const y = Math.round(88.4 + 64.45 * k) + .5;
    line(498, y, right, y, '#7d8a98', grid);
    line(right, y, right + 5, y, '#fff');
    add(g, 'text', { x: right + 5, y: y + 5 }, p);
  });

  VOLUME.forEach((v, i) => i && line(barX(i) + .5, v, barX(i) + .5, FLOOR, '#2f9a2f', { 'stroke-width': 1.5 }));

  BARS.forEach((s, i) => {
    const [hi, a, b, lo] = s.slice(1).split(',').map(Number);
    const x = barX(i) + .5;
    line(x, hi, x, lo, GREEN, { 'stroke-width': 1.5 });
    if (s[0] === 'd') line(x - 2.5, a + .5, x + 2.5, a + .5, GREEN);
    else add(g, 'rect', { x: x - 2, y: a + .5, width: 4, height: Math.max(1, b - a), fill: s[0] === 'u' ? '#000' : '#f2fff0', stroke: GREEN, 'stroke-width': 1.2 });
  });

  line(498, 377.5, right, 377.5, '#6f8a86');
  line(498, 379.5, right, 379.5, '#4fae4f', { 'stroke-dasharray': '5 3' });
  add(g, 'text', { x: 504, y: 376 }, 'SELL 0.1 at 1.32191');
  add(g, 'path', { d: 'M1528.500 369h6v3.500h4.500l-7.500 7-7.500-7h4.500z', fill: '#e03a1c', stroke: '#fff' });
  add(g, 'path', { d: 'M1524 85h15l-7.500 6z', fill: '#8795a5' });
  add(g, 'path', { d: 'M498 661v7h7z', fill: '#8795a5' });

  add(g, 'path', { d: `M497.500 84.500H${right - .5}V668.500H497.500z`, fill: 'none', stroke: '#e8e8e8', 'stroke-width': 1 });
  TIMES.forEach((t, k) => {
    line(barX(k * 16) + .5, FLOOR, barX(k * 16) + .5, FLOOR + 4, '#fff');
    add(g, 'text', { x: barX(k * 16), y: 686 }, t);
  });
  add(g, 'rect', { x: right + 1, y: 369, width: 61, height: 17, fill: '#7d8fa3' });
  add(g, 'text', { x: right + 5, y: 383, style: 'fill:#000' }, '1.32194');
}

draw();
addEventListener('resize', draw);
```
